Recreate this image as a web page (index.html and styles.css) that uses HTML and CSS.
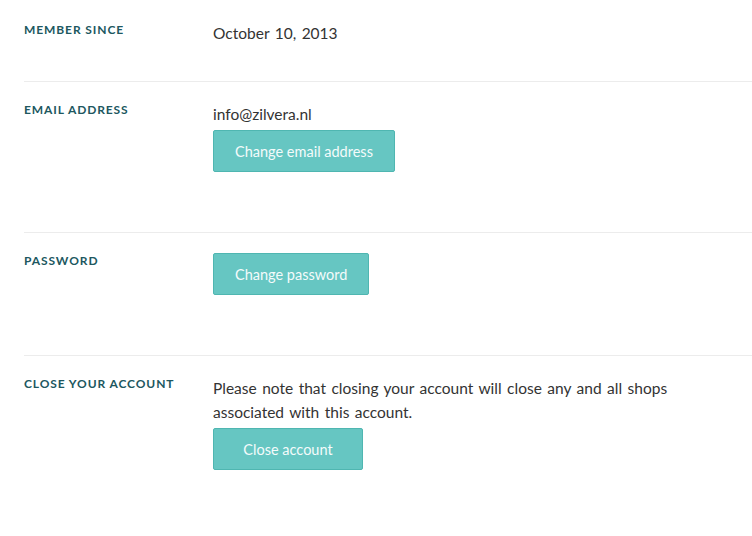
FILE: index.html
```html
<!DOCTYPE html>
<html>
<head>
<meta charset="utf-8">
<link rel="stylesheet" href="styles.css">
</head>
<body>
<div class="settings">
  <div class="row row-first">
    <div class="label">Member since</div>
    <div class="value"><p class="text">October 10, 2013</p></div>
  </div>
  <div class="row">
    <div class="label">Email address</div>
    <div class="value">
      <p class="text">info@zilvera.nl</p>
      <button class="btn">Change email address</button>
    </div>
  </div>
  <div class="row">
    <div class="label">Password</div>
    <div class="value">
      <button class="btn btn-flush">Change password</button>
    </div>
  </div>
  <div class="row row-last">
    <div class="label">Close your account</div>
    <div class="value">
      <p class="text">Please note that closing your account will close any and all shops<br>associated with this account.</p>
      <button class="btn">Close account</button>
    </div>
  </div>
</div>
</body>
</html>
```
FILE: styles.css
```css
html, body {
  margin: 0;
  padding: 0;
  background: #ffffff;
}
body {
  font-family: "Lato", "Liberation Sans", sans-serif;
  color: #333333;
}
.settings {
  padding-left: 24px;
}
.row {
  display: grid;
  grid-template-columns: 189px 1fr;
  padding: 20px 0 60px;
  border-bottom: 1px solid #ececec;
}
.row-first {
  padding: 22px 0 35px;
}
.row-first .text {
  margin-top: -1px;
  margin-bottom: 1px;
}
.row-last {
  border-bottom: none;
}
.label {
  font-size: 12px;
  line-height: 16px;
  font-weight: 700;
  letter-spacing: 0.9px;
  text-transform: uppercase;
  color: #205760;
}
.text {
  margin: 0;
  font-size: 15.5px;
  line-height: 24px;
  word-spacing: 1.5px;
  color: #333333;
}
.btn {
  display: block;
  margin-top: 4px;
  height: 42px;
  min-width: 150px;
  padding: 0 21px;
  font-family: inherit;
  font-size: 14.5px;
  color: #f4fbfb;
  background: #66c6c2;
  border: 1px solid #4fb6b1;
  border-radius: 2px;
  text-align: center;
}
.btn-flush {
  margin-top: 0;
}
```
